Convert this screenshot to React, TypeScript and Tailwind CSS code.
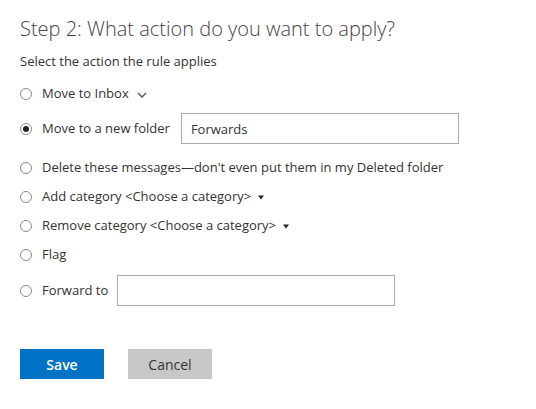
import { useState } from "react";

// Radio circle drawn with plain divs
function Radio({ checked }: { checked?: boolean }) {
  return (
    <span className="flex h-[12px] w-[12px] shrink-0 items-center justify-center rounded-full border border-[#8a8a8a] bg-white">
      {checked && <span className="h-[6px] w-[6px] rounded-full bg-[#222]" />}
    </span>
  );
}

function Caret() {
  return (
    <svg width="6" height="5" viewBox="0 0 6 5" className="ml-[7px] mt-[2px]">
      <path d="M0 0.5 L6 0.5 L3 4.5 Z" fill="#222" />
    </svg>
  );
}

const OPTIONS = [
  "inbox",
  "folder",
  "delete",
  "add",
  "remove",
  "flag",
  "forward",
] as const;

export default function App() {
  const [selected, setSelected] = useState<string>("folder");
  const [folder, setFolder] = useState("Forwards");
  const [forwardTo, setForwardTo] = useState("");

  const row = (id: string, children: React.ReactNode, extra = "h-[29px]") => (
    <div
      key={id}
      className={`flex items-center ${extra} cursor-pointer`}
      onClick={() => setSelected(id)}
    >
      <Radio checked={selected === id} />
      <div className="ml-[10px] flex items-center">{children}</div>
    </div>
  );

  return (
    <div
      className="min-h-[409px] w-[536px] bg-white px-[20px] pt-[15px] text-[13px] text-[#333]"
      style={{ fontFamily: '"Open Sans", "Noto Sans", sans-serif' }}
    >
      <h1 className="h-[28px] text-[20px] leading-[28px] font-light text-[#444]">
        Step 2: What action do you want to apply?
      </h1>

      <p className="mt-[9px] h-[18px] leading-[18px]">Select the action the rule applies</p>

      <div className="mt-[9px] flex flex-col">
        {row(
          OPTIONS[0],
          <>
            <span>Move to Inbox</span>
            <svg width="10" height="6" viewBox="0 0 10 6" className="ml-[8px] mt-[2px]">
              <path d="M1 1 L5 5 L9 1" fill="none" stroke="#555" strokeWidth="1.4" />
            </svg>
          </>
        )}
        {row(
          OPTIONS[1],
          <>
            <span>Move to a new folder</span>
            <input
              value={folder}
              onChange={(e) => setFolder(e.target.value)}
              className="ml-[11px] h-[31px] w-[278px] border border-[#ababab] bg-white px-[9px] text-[13px] text-[#333] outline-none"
            />
          </>,
          "h-[31px] mt-[5px] mb-[9px]"
        )}
        {row(OPTIONS[2], <span>Delete these messages—don't even put them in my Deleted folder</span>)}
        {row(
          OPTIONS[3],
          <>
            <span>Add category &lt;Choose a category&gt;</span>
            <Caret />
          </>
        )}
        {row(
          OPTIONS[4],
          <>
            <span>Remove category &lt;Choose a category&gt;</span>
            <Caret />
          </>
        )}
        {row(OPTIONS[5], <span>Flag</span>)}
        {row(
          OPTIONS[6],
          <>
            <span>Forward to</span>
            <input
              value={forwardTo}
              onChange={(e) => setForwardTo(e.target.value)}
              className="ml-[9px] h-[31px] w-[278px] border border-[#ababab] bg-white px-[9px] text-[13px] text-[#333] outline-none"
            />
          </>,
          "h-[31px] mt-[6px]"
        )}
      </div>

      <div className="mt-[43px] flex gap-[24px]">
        <button className="h-[30px] w-[84px] bg-[#0072c6] text-[14px] font-semibold text-white">
          Save
        </button>
        <button className="h-[30px] w-[84px] bg-[#c8c8c8] text-[14px] text-[#333]">
          Cancel
        </button>
      </div>
    </div>
  );
}
